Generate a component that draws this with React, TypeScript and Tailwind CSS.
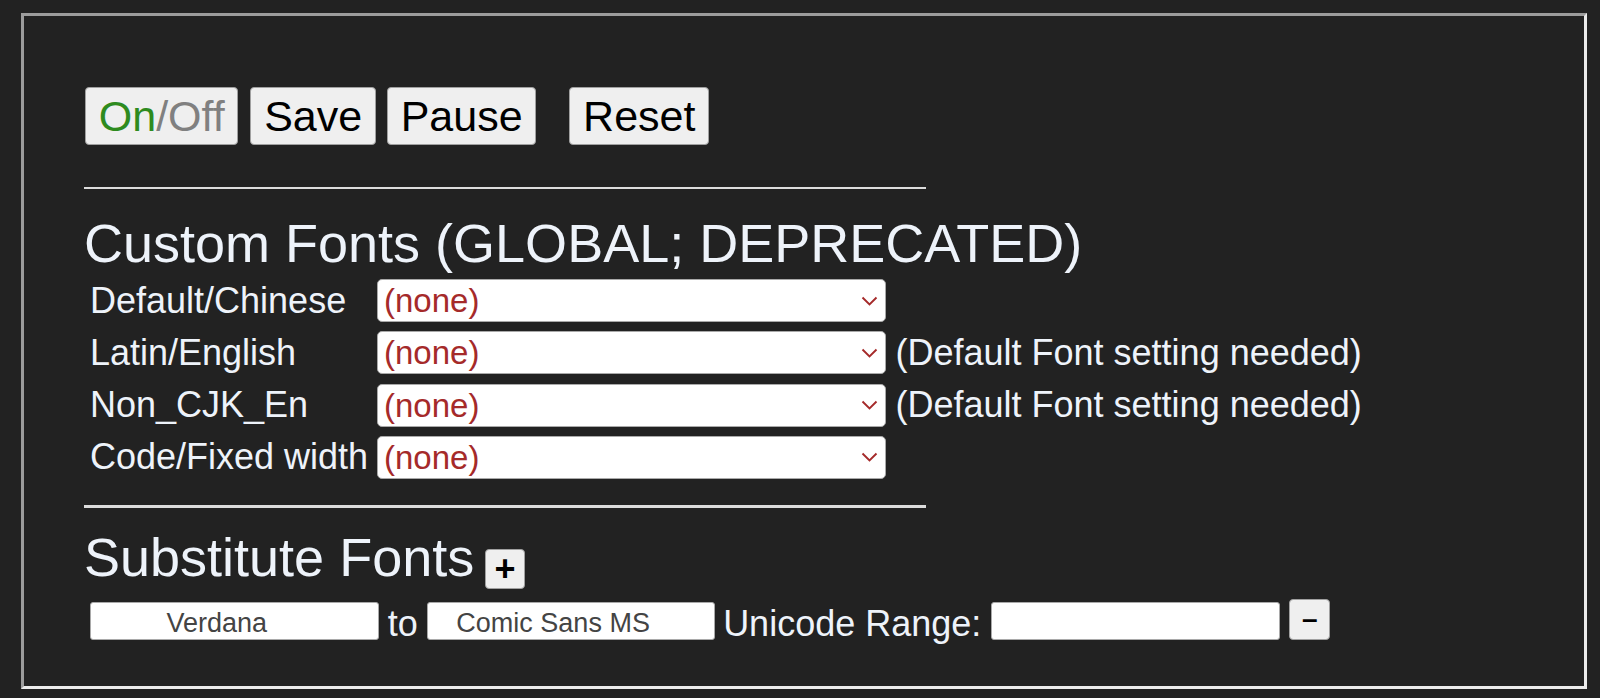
import React from "react";

const font = { fontFamily: '"Liberation Sans", Arial, Helvetica, sans-serif' };

function Chevron() {
  return (
    <svg width="17" height="10" viewBox="0 0 17 10" className="shrink-0">
      <polyline points="1.5,1.5 8.5,8.5 15.5,1.5" fill="none" stroke="#a52a2a" strokeWidth="1.9" />
    </svg>
  );
}

function Select() {
  return (
    <div className="flex h-[43px] w-[509px] items-center justify-between rounded-[5px] border-[1.5px] border-[#a9a9a9] bg-white pl-[6px] pr-[7px]">
      <span className="text-[33px] leading-none text-[#a52a2a]">(none)</span>
      <Chevron />
    </div>
  );
}

function Btn({ children, className = "" }: { children: React.ReactNode; className?: string }) {
  return (
    <button
      type="button"
      className={
        "flex h-[58px] items-center rounded-[4px] border-[1.5px] border-[#a0a0a0] bg-[#efefef] px-[12.75px] text-[43px] leading-none text-black " +
        className
      }
    >
      {children}
    </button>
  );
}

const rows: { label: string; note?: boolean }[] = [
  { label: "Default/Chinese" },
  { label: "Latin/English", note: true },
  { label: "Non_CJK_En", note: true },
  { label: "Code/Fixed width" },
];

export default function App() {
  return (
    <div className="min-h-screen bg-[#222222] pl-[21px] pt-[13px]" style={font}>
      <div className="h-[676px] w-[1566px] border-[3px] border-b-[#ececec] border-l-[#9c9c9c] border-r-[#ececec] border-t-[#9c9c9c] pl-[60px] text-[#eef3fa]">
        {/* buttons */}
        <div className="mt-[71px] flex items-center pl-[1px]">
          <Btn>
            <span className="text-[#2e8b1e]">On</span>
            <span className="text-[#808080]">/Off</span>
          </Btn>
          <Btn className="ml-[12px]">Save</Btn>
          <Btn className="ml-[11px]">Pause</Btn>
          <Btn className="ml-[33px]">Reset</Btn>
        </div>

        <div className="mt-[41.5px] h-[2.5px] w-[842px] bg-[#dcdcdc]" />

        <h2 className="mt-[26.5px] text-[54px] font-normal leading-none">Custom Fonts (GLOBAL; DEPRECATED)</h2>

        <div className="mt-[9.5px] flex flex-col gap-[9.3px]">
          {rows.map((r) => (
            <div key={r.label} className="flex h-[43px] items-center">
              <span className="ml-[6px] w-[287px] text-[36px] leading-none">{r.label}</span>
              <Select />
              {r.note && (
                <span className="ml-[9.5px] text-[36px] leading-none">(Default Font setting needed)</span>
              )}
            </div>
          ))}
        </div>

        <div className="mt-[26.3px] h-[2.5px] w-[842px] bg-[#dcdcdc]" />

        <div className="mt-[22.6px] flex items-start">
          <h2 className="text-[54px] font-normal leading-none">Substitute Fonts</h2>
          <button
            type="button"
            className="ml-[10.8px] mt-[18.4px] flex h-[40px] w-[40px] items-center justify-center rounded-[4px] border-[1.5px] border-[#a0a0a0] bg-[#efefef] text-[36px] font-bold leading-none text-black"
          >
            +
          </button>
        </div>

        <div className="mt-[10.3px] flex items-end">
          <input
            readOnly
            value="Verdana"
            className="ml-[6.3px] h-[37.3px] w-[289px] rounded-[3px] border-[1.5px] border-[#a9a9a9] bg-white pr-[36px] pt-[4px] text-center text-[27px] text-[#444444] outline-none"
          />
          <span className="mb-[-2.5px] ml-[8.5px] text-[36px] leading-none">to</span>
          <input
            readOnly
            value="Comic Sans MS"
            className="ml-[9.3px] h-[37.3px] w-[288px] rounded-[3px] border-[1.5px] border-[#a9a9a9] bg-white pr-[36px] pt-[4px] text-center text-[27px] text-[#444444] outline-none"
          />
          <span className="mb-[-2.5px] ml-[8px] text-[36px] leading-none">Unicode Range:</span>
          <input
            readOnly
            value=""
            className="ml-[10px] h-[37.3px] w-[289px] rounded-[3px] border-[1.5px] border-[#a9a9a9] bg-white text-[27px] text-[#444444] outline-none"
          />
          <button
            type="button"
            className="ml-[9px] flex h-[40.7px] w-[41px] items-center justify-center rounded-[4px] border-[1.5px] border-[#a0a0a0] bg-[#efefef] text-[28px] font-bold leading-none text-black"
          >
            –
          </button>
        </div>
      </div>
    </div>
  );
}
